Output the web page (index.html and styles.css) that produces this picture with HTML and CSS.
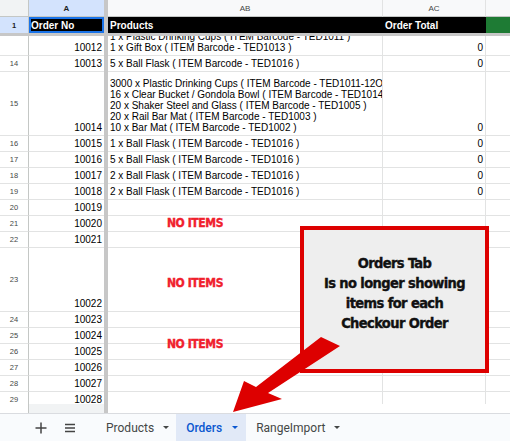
FILE: index.html
```html
<!DOCTYPE html>
<html>
<head>
<meta charset="utf-8">
<link rel="stylesheet" href="styles.css">
</head>
<body>
<div class="sheet">
  <div class="row colhead">
    <div class="c rh corner"></div>
    <div class="c ca sel">A</div>
    <div class="c dv"></div>
    <div class="c cb">AB</div>
    <div class="c cc">AC</div>
    <div class="c cd"></div>
  </div>
  <div class="row r1">
    <div class="c rh rsel">1</div>
    <div class="c ca hd a1">Order No</div>
    <div class="c dv"></div>
    <div class="c cb hd">Products</div>
    <div class="c cc hd">Order Total</div>
    <div class="c cd green"></div>
  </div>
  <div class="hbar"></div>
  <div class="body">
    <div class="row h27 first">
      <div class="c rh"></div>
      <div class="c ca num">10012</div>
      <div class="c dv"></div>
      <div class="c cb txt"><span>1 x Plastic Drinking Cups ( ITEM Barcode - TED1011 )<br>1 x Gift Box ( ITEM Barcode - TED1013 )</span></div>
      <div class="c cc num">0</div>
      <div class="c cd"></div>
    </div>
    <div class="row h16">
      <div class="c rh">14</div>
      <div class="c ca num">10013</div>
      <div class="c dv"></div>
      <div class="c cb txt">5 x Ball Flask ( ITEM Barcode - TED1016 )</div>
      <div class="c cc num">0</div>
      <div class="c cd"></div>
    </div>
    <div class="row h64">
      <div class="c rh">15</div>
      <div class="c ca num">10014</div>
      <div class="c dv"></div>
      <div class="c cb txt"><span>3000 x Plastic Drinking Cups ( ITEM Barcode - TED1011-12OZ )<br>16 x Clear Bucket / Gondola Bowl ( ITEM Barcode - TED1014 )<br>20 x Shaker Steel and Glass ( ITEM Barcode - TED1005 )<br>20 x Rail Bar Mat ( ITEM Barcode - TED1003 )<br>10 x Bar Mat ( ITEM Barcode - TED1002 )</span></div>
      <div class="c cc num">0</div>
      <div class="c cd"></div>
    </div>
    <div class="row h16">
      <div class="c rh">16</div>
      <div class="c ca num">10015</div>
      <div class="c dv"></div>
      <div class="c cb txt">1 x Ball Flask ( ITEM Barcode - TED1016 )</div>
      <div class="c cc num">0</div>
      <div class="c cd"></div>
    </div>
    <div class="row h16">
      <div class="c rh">17</div>
      <div class="c ca num">10016</div>
      <div class="c dv"></div>
      <div class="c cb txt">5 x Ball Flask ( ITEM Barcode - TED1016 )</div>
      <div class="c cc num">0</div>
      <div class="c cd"></div>
    </div>
    <div class="row h16">
      <div class="c rh">18</div>
      <div class="c ca num">10017</div>
      <div class="c dv"></div>
      <div class="c cb txt">2 x Ball Flask ( ITEM Barcode - TED1016 )</div>
      <div class="c cc num">0</div>
      <div class="c cd"></div>
    </div>
    <div class="row h16">
      <div class="c rh">19</div>
      <div class="c ca num">10018</div>
      <div class="c dv"></div>
      <div class="c cb txt">2 x Ball Flask ( ITEM Barcode - TED1016 )</div>
      <div class="c cc num">0</div>
      <div class="c cd"></div>
    </div>
    <div class="row h16">
      <div class="c rh">20</div>
      <div class="c ca num">10019</div>
      <div class="c dv"></div>
      <div class="c cb"></div>
      <div class="c cc"></div>
      <div class="c cd"></div>
    </div>
    <div class="row h16">
      <div class="c rh">21</div>
      <div class="c ca num">10020</div>
      <div class="c dv"></div>
      <div class="c cb"></div>
      <div class="c cc"></div>
      <div class="c cd"></div>
    </div>
    <div class="row h16">
      <div class="c rh">22</div>
      <div class="c ca num">10021</div>
      <div class="c dv"></div>
      <div class="c cb"></div>
      <div class="c cc"></div>
      <div class="c cd"></div>
    </div>
    <div class="row h64">
      <div class="c rh">23</div>
      <div class="c ca num">10022</div>
      <div class="c dv"></div>
      <div class="c cb"></div>
      <div class="c cc"></div>
      <div class="c cd"></div>
    </div>
    <div class="row h16">
      <div class="c rh">24</div>
      <div class="c ca num">10023</div>
      <div class="c dv"></div>
      <div class="c cb"></div>
      <div class="c cc"></div>
      <div class="c cd"></div>
    </div>
    <div class="row h16">
      <div class="c rh">25</div>
      <div class="c ca num">10024</div>
      <div class="c dv"></div>
      <div class="c cb"></div>
      <div class="c cc"></div>
      <div class="c cd"></div>
    </div>
    <div class="row h16">
      <div class="c rh">26</div>
      <div class="c ca num">10025</div>
      <div class="c dv"></div>
      <div class="c cb"></div>
      <div class="c cc"></div>
      <div class="c cd"></div>
    </div>
    <div class="row h16">
      <div class="c rh">27</div>
      <div class="c ca num">10026</div>
      <div class="c dv"></div>
      <div class="c cb"></div>
      <div class="c cc"></div>
      <div class="c cd"></div>
    </div>
    <div class="row h16">
      <div class="c rh">28</div>
      <div class="c ca num">10027</div>
      <div class="c dv"></div>
      <div class="c cb"></div>
      <div class="c cc"></div>
      <div class="c cd"></div>
    </div>
    <div class="row h16">
      <div class="c rh">29</div>
      <div class="c ca num">10028</div>
      <div class="c dv"></div>
      <div class="c cb"></div>
      <div class="c cc"></div>
      <div class="c cd"></div>
    </div>
  </div>
  <div class="row hscroll">
    <div class="c rh"></div>
    <div class="c ca sbar"></div>
    <div class="c dv"></div>
    <div class="c cb sb2"></div>
    <div class="c cc sb2"></div>
    <div class="c cd sb2"></div>
  </div>
  <div class="tabs">
    <svg class="ico plus" width="12" height="12" viewBox="0 0 12 12"><path d="M6 0.5V11.5M0.5 6H11.5" stroke="#444" stroke-width="1.5" fill="none"/></svg>
    <svg class="ico menu" width="12" height="10" viewBox="0 0 12 10"><path d="M1 1.5H11M1 5H11M1 8.5H11" stroke="#444" stroke-width="1.5" fill="none"/></svg>
    <div class="tab t1"><span>Products</span><i class="caret"></i></div>
    <div class="tab t2 active"><span>Orders</span><i class="caret"></i></div>
    <div class="tab t3"><span>RangeImport</span><i class="caret"></i></div>
  </div>

  <div class="noitems n1">NO ITEMS</div>
  <div class="noitems n2">NO ITEMS</div>
  <div class="noitems n3">NO ITEMS</div>

  <div class="callout">
    <p>Orders Tab</p>
    <p>Is no longer showing</p>
    <p>items for each</p>
    <p>Checkour Order</p>
  </div>
  <svg class="arrow" width="510" height="441" viewBox="0 0 510 441"><polygon points="233,412 244,381 256,387 321,337 340,346 268,393 282,399" fill="#dd0000"/></svg>
</div>
</body>
</html>
```

FILE: styles.css
```css
* { box-sizing: border-box; margin: 0; padding: 0; }
html, body { width: 510px; height: 441px; overflow: hidden; background: #fff; }
body { font-family: "Liberation Sans", Arial, sans-serif; color: #000; }

.sheet { position: relative; width: 510px; height: 441px; display: flex; flex-direction: column; }

.row { display: grid; grid-template-columns: 29px 75px 4px 275px 103px 1fr; flex: none; }

.c { border-bottom: 1px solid #e2e3e3; border-right: 1px solid #e2e3e3; overflow: hidden; white-space: nowrap; font-size: 10px; line-height: 11px; display: flex; align-items: flex-end; padding: 0 2px 2px 2px; }
.c.ca { border-right: none; }
.c.dv { background: #c7c7c7; border: none; padding: 0; }
.c.cd { border-right: none; }
.c.rh { border-right: 1px solid #c4c7c5; justify-content: center; align-items: center; padding: 0; font-size: 7.5px; color: #444746; }

.num { justify-content: flex-end; }
.txt span { display: block; }

.colhead { height: 17px; background: #f8f9fa; }
.colhead .c { align-items: center; justify-content: center; padding: 0; font-size: 8px; color: #444746; border-bottom: 1px solid #c4c7c5; background: #f8f9fa; }
.colhead .corner { background: #f1f3f4; }
.colhead .sel { background: #d3e3fd; color: #1f1f1f; font-weight: bold; }
.colhead .dv { background: #c7c7c7; }

.r1 { height: 16px; }
.r1 .c { border-bottom: none; }
.r1 .rh { background: #d3e3fd; color: #1f1f1f; font-weight: bold; }
.r1 .hd { background: #000; color: #fff; font-weight: bold; align-items: center; padding: 0 2px; border-right-color: #000; }
.r1 .a1 { box-shadow: inset 0 0 0 2px #1a73e8; }
.r1 .green { background: #1e7b34; }

.hbar { height: 3px; background: #c7c7c7; flex: none; }

.body { height: 368px; overflow: hidden; flex: none; }
.h16 { height: 16px; }
.h27 { height: 27px; }
.h64 { height: 64px; }
.first { margin-top: -7px; }

.hscroll { height: 10px; border-bottom: 1px solid #dadce0; }
.hscroll .c { border-bottom: none; }
.hscroll .sbar { background: #f1f3f4; }
.hscroll .sb2 { border-right: none; }

.tabs { height: 27px; background: #f9fbfd; display: flex; align-items: center; flex: none; font-family: Roboto, "Liberation Sans", sans-serif; font-size: 12px; color: #444746; }
.ico { flex: none; display: block; }
.plus { margin-left: 35px; }
.menu { margin-left: 17px; margin-right: 20px; }
.tab { height: 27px; display: flex; align-items: center; padding: 0 7px 0 10px; gap: 9px; }
.tab.active { background: #e1e9f7; color: #0b57d0; font-weight: 500; padding: 0 8px 0 10px; gap: 10px; }
.caret { display: block; width: 0; height: 0; border-left: 3.5px solid transparent; border-right: 3.5px solid transparent; border-top: 3.5px solid currentColor; }

.noitems { position: absolute; left: 140px; width: 110px; text-align: center; white-space: nowrap; font-family: "DejaVu Sans Condensed", "DejaVu Sans", sans-serif; font-stretch: condensed; font-weight: bold; font-size: 12px; letter-spacing: -0.4px; line-height: 14px; color: #f0202c; -webkit-text-stroke: 0.4px #f0202c; }
.n1 { top: 216px; }
.n2 { top: 276px; }
.n3 { top: 337px; }

.callout { position: absolute; left: 300px; top: 226px; width: 189px; height: 147px; border: 4px solid #dd0000; background: #eeeeee; padding-top: 23px; text-align: center; white-space: nowrap; font-family: "DejaVu Sans Condensed", "DejaVu Sans", sans-serif; font-stretch: condensed; font-weight: bold; font-size: 14.5px; letter-spacing: -0.6px; line-height: 20px; color: #111; -webkit-text-stroke: 0.4px #111; }

.arrow { position: absolute; left: 0; top: 0; pointer-events: none; }
```
